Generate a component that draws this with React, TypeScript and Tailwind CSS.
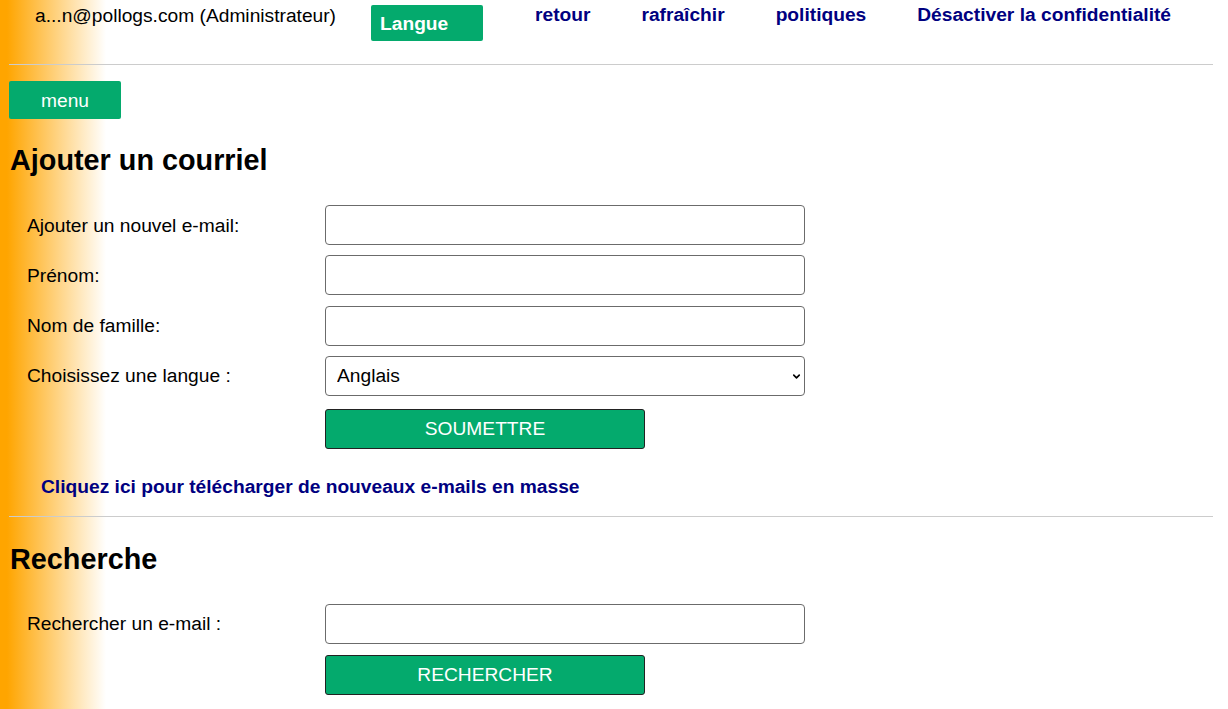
import { ChevronDown } from 'lucide-react';

const navLinks = ['retour', 'rafraîchir', 'politiques', 'Désactiver la confidentialité'];

const addFields = ['Ajouter un nouvel e-mail:', 'Prénom:', 'Nom de famille:'];

function TextRow({ label }: { label: string }) {
  return (
    <div className="grid grid-cols-[298px_480px] items-center">
      <label>{label}</label>
      <input
        type="text"
        className="h-[40px] w-[480px] rounded-[4px] border border-[#6b6b6b] bg-white px-2 outline-none"
      />
    </div>
  );
}

function GreenButton({ children }: { children: string }) {
  return (
    <button className="ml-[298px] flex h-[40px] w-[320px] items-center justify-center rounded-[3px] border border-[#222] bg-[#04AA6D] text-white">
      {children}
    </button>
  );
}

export default function App() {
  return (
    <div className="min-h-screen bg-[linear-gradient(to_right,#ffa500_7px,#ffffff_106px)] pl-[8px] pr-[15px] font-['Liberation_Sans',Arial,sans-serif] text-[19.2px] leading-[23px] text-black">
      <header className="flex h-[64px] items-start">
        <span className="ml-[27px] pt-[4px]">a...n@pollogs.com (Administrateur)</span>
        <button className="ml-[35px] mt-[5px] flex h-[36px] w-[112px] items-center rounded-[2px] bg-[#04AA6D] pl-[9px] font-bold text-white">
          Langue
        </button>
        <nav className="ml-[52px] flex gap-[51px] pt-[3px] font-bold text-[#000080]">
          {navLinks.map((l) => (
            <a key={l} href="#">
              {l}
            </a>
          ))}
        </nav>
      </header>
      <div className="ml-[1px] border-t border-[#cccccc]" />

      <button className="ml-[1px] mt-[16px] flex h-[38px] w-[112px] items-center justify-center rounded-[2px] bg-[#04AA6D] text-white">
        menu
      </button>

      <h2 className="ml-[2px] mt-[25px] text-[28.8px] font-bold leading-[33px]">Ajouter un courriel</h2>

      <div className="ml-[19px] mt-[28px] flex flex-col gap-[10.3px]">
        {addFields.map((f) => (
          <TextRow key={f} label={f} />
        ))}
        <div className="grid grid-cols-[298px_480px] items-center">
          <label>Choisissez une langue :</label>
          <div className="relative">
            <select className="h-[40px] w-[480px] appearance-none rounded-[4px] border border-[#6b6b6b] bg-white pl-[11px] outline-none">
              <option>Anglais</option>
              <option>Français</option>
            </select>
            <ChevronDown
              size={11}
              strokeWidth={3.5}
              className="pointer-events-none absolute right-[3px] top-[15px] text-black"
            />
          </div>
        </div>
      </div>
      <div className="ml-[19px] mt-[13px]">
        <GreenButton>SOUMETTRE</GreenButton>
      </div>

      <a href="#" className="ml-[33px] mt-[26px] inline-block font-bold text-[#000080]">
        Cliquez ici pour télécharger de nouveaux e-mails en masse
      </a>
      <div className="ml-[1px] mt-[18px] border-t border-[#cccccc]" />

      <h2 className="ml-[2px] mt-[26px] text-[28.8px] font-bold leading-[33px]">Recherche</h2>

      <div className="ml-[19px] mt-[28px] flex flex-col gap-[11px] pb-[14px]">
        <TextRow label="Rechercher un e-mail :" />
        <GreenButton>RECHERCHER</GreenButton>
      </div>
    </div>
  );
}
